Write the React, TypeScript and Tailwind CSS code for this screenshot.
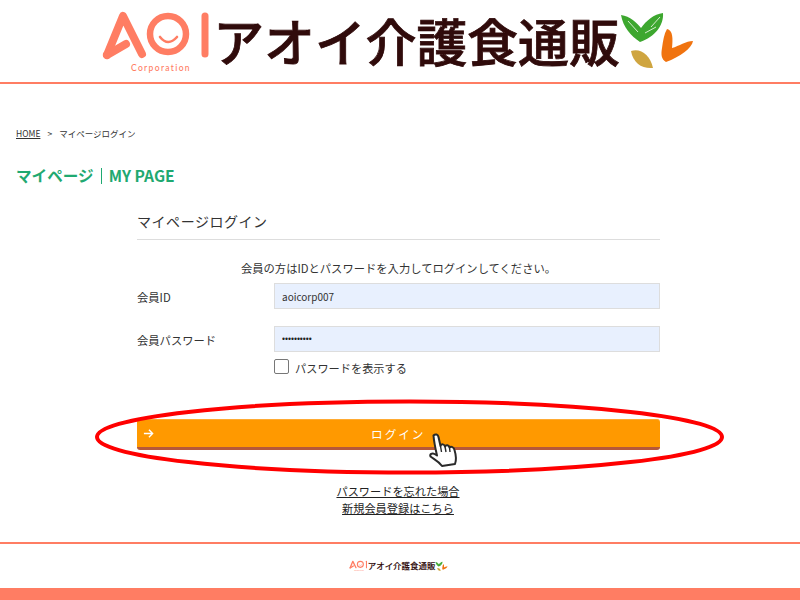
const JP = "font-['Noto_Sans_CJK_JP','Noto_Sans',sans-serif]";

function AoiMark({ h }: { h: number }) {
  return (
    <svg viewBox="100 8 110 68" style={{ height: h, width: (h * 110) / 68 }} className="shrink-0">
      <g fill="none" stroke="#ff7d63" strokeLinecap="round" strokeLinejoin="round">
        <path d="M107 55 L123 16 L142 54" strokeWidth="8" />
        <path d="M107 55 L126 44" strokeWidth="8" />
        <circle cx="168" cy="34" r="18" strokeWidth="6.5" />
        <path d="M160 37 Q168 47 177 37" strokeWidth="2.6" />
        <path d="M205 16 V54" strokeWidth="7" />
      </g>
      <text x="131" y="71" fontSize="8.5" letterSpacing="1.35" fontWeight="500" fill="#ff7d63" fontFamily="Lato, sans-serif">
        Corporation
      </text>
    </svg>
  );
}

function Leaves({ h }: { h: number }) {
  return (
    <svg viewBox="618 8 78 62" style={{ height: h, width: (h * 78) / 62 }} className="shrink-0">
      <path d="M621 14 C630 15 637 22 641 27 C646 20 654 13 663 12 C664 24 655 36 640 41 C631 35 623 26 621 14 Z" fill="#3da72f" />
      <path d="M628 20 L638 31 M651 26 L660 16 M645 32 L656 26" stroke="#e7f5e0" strokeWidth="0.9" fill="none" />
      <path d="M667 28 C673 29 673 38 672 47 C679 45 686 40 693 40 C692 47 680 56 666 61 C661 58 661 53 662 47 C663 40 664 33 667 28 Z" fill="#f0730f" />
      <path d="M631 50 C641 47 650 54 653 67 C642 68 633 62 631 50 Z" fill="#cfa540" />
    </svg>
  );
}

function Logo({ scale }: { scale: number }) {
  return (
    <div className="flex items-center" style={{ height: 82 * scale }}>
      <div style={{ marginTop: 2 * scale }}>
        <AoiMark h={68 * scale} />
      </div>
      <span
        className={`${JP} font-medium whitespace-nowrap text-[#300b0b] leading-none`}
        style={{
          fontSize: 50.8 * scale,
          marginLeft: 3 * scale,
          marginTop: -2 * scale,
          WebkitTextStroke: `${0.8 * scale}px #300b0b`,
        }}
      >
        アオイ介護食通販
      </span>
      <div style={{ marginLeft: -2 * scale, marginTop: -2 * scale }}>
        <Leaves h={62 * scale} />
      </div>
    </div>
  );
}

function Hand() {
  return (
    <svg viewBox="0 0 32 36" className="absolute left-[428px] top-[432px] w-[33px] h-[36px]">
      <path
        d="M5 3.5 C7 1.5 9.5 2.5 10 5 L12 14 C13 11.5 16 12 16.5 14.5 C17.5 12.5 20.5 13 21 15.5 C22.5 14 25.5 15 26 18 C27.5 23 28 28 26.5 32 L13.5 34 C10 29 6 27.5 2 24.5 C1 22.5 3.5 20.5 6 22 L8.5 23.5 C7 17 5.5 10 5 3.5 Z"
        fill="#fff"
        stroke="#2a2a2a"
        strokeWidth="2"
        strokeLinejoin="round"
      />
      <path d="M16.5 14.5 L17.5 20 M21 15.5 L21.5 20 M12 14 L13 20" stroke="#2a2a2a" strokeWidth="1.4" fill="none" />
    </svg>
  );
}

export default function App() {
  return (
    <div className={`${JP} relative w-[800px] h-[600px] overflow-hidden bg-white text-[#333] flex flex-col`}>
      <header className="h-[84px] shrink-0 border-b-2 border-[#ff7d63] flex justify-center">
        <div className="ml-[-4px]">
          <Logo scale={1} />
        </div>
      </header>

      <main className="flex-1">
        <nav className="mt-[43px] ml-[16px] flex items-center h-[13px] text-[8.5px] leading-none">
          <span className="underline text-[#333]">HOME</span>
          <span className="mx-[7px]">&gt;</span>
          <span>マイページログイン</span>
        </nav>

        <h1 className="mt-[27px] ml-[16px] flex items-center h-[18px] text-[15.6px] font-bold leading-none text-[#1fa971]">
          <span>マイページ</span>
          <span className="w-px h-[16px] bg-[#1fa971] mx-[7px]" />
          <span>MY PAGE</span>
        </h1>

        <section className="mt-[27px] ml-[137px] w-[523px]">
          <h2 className="h-[28px] border-b border-[#ddd] text-[14px] tracking-[0.55px] leading-[18px] font-normal text-[#333]">
            マイページログイン
          </h2>
          <p className="mt-[20px] text-center text-[11.3px] leading-[16px]">
            会員の方はIDとパスワードを入力してログインしてください。
          </p>

          <div className="mt-[7px] flex items-center h-[26px]">
            <label className="w-[137px] text-[11.3px] pt-[2px]">会員ID</label>
            <input
              readOnly
              value="aoicorp007"
              className="flex-1 h-[26px] bg-[#e8f0fe] border border-[#ddd] px-[7px] text-[10px] text-[#333] outline-none"
            />
          </div>
          <div className="mt-[17px] flex items-center h-[26px]">
            <label className="w-[137px] text-[11.3px] pt-[2px]">会員パスワード</label>
            <input
              readOnly
              type="password"
              value="aoicorp007"
              className="flex-1 h-[26px] bg-[#e8f0fe] border border-[#ddd] px-[7px] font-['Liberation_Sans',sans-serif] text-[8.5px] text-[#222] outline-none"
            />
          </div>
          <div className="mt-[7px] ml-[137px] flex items-center h-[15px] text-[11.2px]">
            <span className="w-[15px] h-[15px] bg-white border border-[#777] rounded-[2px]" />
            <span className="ml-[6px] pt-[3px]">パスワードを表示する</span>
          </div>

          <button className="relative mt-[45px] -ml-[0.5px] block w-[523.5px] h-[31px] rounded-[3px] bg-[#ff9900] border-t border-t-[#ffab33] border-b-[3px] border-b-[#b5583a] pt-[2px] text-white text-[11.6px] tracking-[2px] leading-none">
            <svg viewBox="0 0 12 12" className="absolute left-[6px] top-[8px] w-[11px] h-[11px]" fill="none" stroke="#fff" strokeWidth="1.5">
              <path d="M1 6 H10.5 M6.5 2 L10.5 6 L6.5 10" />
            </svg>
            ログイン
          </button>

          <div className="mt-[33px] flex flex-col items-center text-[11.2px] leading-[17px] text-[#222] -ml-px">
            <a className="underline">パスワードを忘れた場合</a>
            <a className="underline">新規会員登録はこちら</a>
          </div>
        </section>
      </main>

      <footer className="shrink-0 h-[46px] border-t-2 border-[#ff7d63] flex justify-center pt-[15px]">
        <div className="ml-[-3px]">
          <Logo scale={0.167} />
        </div>
      </footer>
      <div className="shrink-0 h-[12px] bg-[#ff7d63]" />

      <svg viewBox="0 0 800 600" className="absolute inset-0 w-[800px] h-[600px] pointer-events-none">
        <ellipse cx="409.5" cy="437" rx="312.5" ry="35.5" fill="none" stroke="#ff0000" strokeWidth="4" />
      </svg>
      <Hand />
    </div>
  );
}
